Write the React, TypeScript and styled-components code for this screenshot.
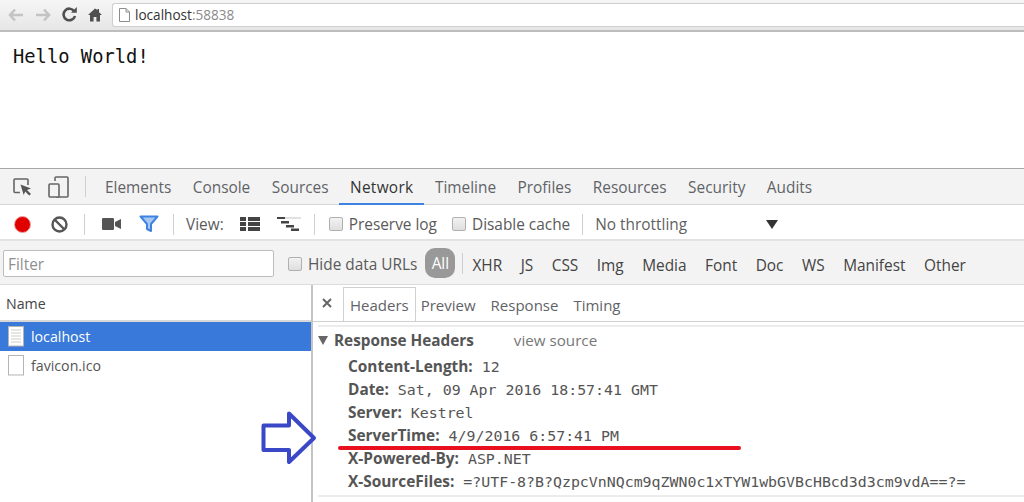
import styled, { createGlobalStyle } from "styled-components";

const GlobalStyle = createGlobalStyle`
  html, body {
    margin: 0;
    padding: 0;
    background: #fff;
    overflow: hidden;
  }
  * { box-sizing: border-box; }
`;

const Page = styled.div`
  position: relative;
  width: 1024px;
  height: 502px;
  overflow: hidden;
  font-family: "Open Sans", "Noto Sans", sans-serif;
  font-size: 15.4px;
  color: #5a5a5a;
  display: flex;
  flex-direction: column;
`;

const BrowserBar = styled.div`
  height: 32px;
  flex: none;
  display: flex;
  align-items: center;
  padding: 0 0 1px 8px;
  background: linear-gradient(#f6f6f6, #e6e6e6);
  border-bottom: 2px solid #bdbdbd;
`;

const NavIcon = styled.svg<{ $left?: number }>`
  flex: none;
  display: block;
  margin-left: ${(p) => p.$left ?? 0}px;
`;

const AddressBox = styled.div`
  flex: 1;
  height: 24px;
  margin-left: 10px;
  display: flex;
  align-items: center;
  gap: 5px;
  padding-left: 6px;
  background: #fff;
  border: 1px solid #cfcfcf;
  border-right: 0;
  border-radius: 3px 0 0 3px;
  font-size: 13.6px;
  color: #333;
`;

const Port = styled.span`
  color: #8a8a8a;
`;

const Content = styled.div`
  height: 136px;
  flex: none;
  padding: 12px 0 0 13px;
  font-family: "DejaVu Sans Mono", monospace;
  font-size: 18.8px;
  line-height: 26px;
  color: #111;
`;

const TabBar = styled.div`
  height: 37px;
  flex: none;
  display: flex;
  align-items: stretch;
  background: #f3f3f3;
  border-top: 1px solid #a8a8a8;
  border-bottom: 1px solid #d6d6d6;
  padding-left: 13px;
`;

const IconGroup = styled.div`
  display: flex;
  align-items: center;
  gap: 16px;
`;

const Separator = styled.div<{ $left: number; $right: number }>`
  flex: none;
  align-self: center;
  width: 1px;
  height: 21px;
  background: #cfcfcf;
  margin: 0 ${(p) => p.$right}px 0 ${(p) => p.$left}px;
`;

const MainTabs = styled.div`
  display: flex;
  gap: 21.5px;
`;

const MainTab = styled.div<{ $active?: boolean }>`
  position: relative;
  display: flex;
  align-items: center;
  padding-top: 2px;
  letter-spacing: ${(p) => (p.$active ? "0.3px" : "0")};
  color: ${(p) => (p.$active ? "#333" : "#5f6368")};
  &::after {
    content: "";
    display: ${(p) => (p.$active ? "block" : "none")};
    position: absolute;
    left: -11px;
    right: -11px;
    bottom: -1px;
    height: 2px;
    background: #3f83e0;
  }
`;

const NetToolbar = styled.div`
  height: 36px;
  flex: none;
  display: flex;
  align-items: center;
  padding: 4px 0 0 13px;
  background: #fff;
  border-bottom: 2px solid #e2e2e2;
`;

const ToolIcon = styled.svg<{ $gap?: number }>`
  flex: none;
  display: block;
  margin-right: ${(p) => p.$gap ?? 0}px;
`;

const Check = styled.span`
  flex: none;
  width: 14px;
  height: 14px;
  background: linear-gradient(#f2f2f2, #dedede);
  border: 1px solid #b0b0b0;
  border-radius: 2px;
`;

const CheckLabel = styled.label<{ $gap?: number }>`
  flex: none;
  display: flex;
  align-items: center;
  gap: 6px;
  margin-right: ${(p) => p.$gap ?? 0}px;
  white-space: nowrap;
`;

const Throttle = styled.div`
  flex: none;
  width: 183px;
  display: flex;
  align-items: center;
  justify-content: space-between;
  color: #5f5f5f;
`;

const Caret = styled.span`
  width: 0;
  height: 0;
  border-left: 6px solid transparent;
  border-right: 6px solid transparent;
  border-top: 9px solid #333;
`;

const FilterBar = styled.div`
  height: 44px;
  flex: none;
  display: flex;
  align-items: center;
  padding: 1px 0 0 3px;
  background: #f3f3f3;
  border-bottom: 1px solid #dcdcdc;
  ${CheckLabel} {
    margin-top: 2px;
  }
`;

const FilterInput = styled.div`
  flex: none;
  width: 271px;
  height: 27px;
  margin-right: 14px;
  padding: 2px 0 0 4px;
  display: flex;
  align-items: center;
  background: #fff;
  border: 1px solid #bdbdbd;
  border-radius: 2px;
  color: #8f8f8f;
`;

const AllPill = styled.div`
  flex: none;
  width: 30px;
  height: 30px;
  display: flex;
  align-items: center;
  justify-content: center;
  border-radius: 10px;
  background: #999;
  color: #fff;
`;

const FilterTypes = styled.div`
  display: flex;
  gap: 18.5px;
  margin-top: 4px;
  color: #444;
`;

const Panels = styled.div`
  flex: 1;
  min-height: 0;
  display: flex;
`;

const NamePanel = styled.div`
  flex: none;
  width: 313px;
  border-right: 2px solid #c4c4c4;
  font-size: 14.2px;
`;

const NameHeader = styled.div`
  height: 37px;
  padding: 2px 0 0 6px;
  display: flex;
  align-items: center;
  border-bottom: 2px solid #d8d8d8;
  color: #444;
`;

const FileRow = styled.div<{ $selected?: boolean }>`
  height: 29px;
  display: flex;
  align-items: center;
  gap: 6px;
  padding-left: 8px;
  background: ${(p) => (p.$selected ? "#3879d9" : "#fff")};
  color: ${(p) => (p.$selected ? "#fff" : "#555")};
`;

const Details = styled.div`
  flex: 1;
  min-width: 0;
`;

const DetailTabs = styled.div`
  height: 37px;
  display: flex;
  align-items: flex-end;
  padding-left: 9px;
  border-bottom: 1px solid #d0d0d0;
  font-size: 15px;
`;

const CloseMark = styled.svg`
  flex: none;
  align-self: center;
  display: block;
  margin-right: 11px;
`;

const DetailTab = styled.div<{ $active?: boolean }>`
  height: 34px;
  display: flex;
  align-items: center;
  padding: 1px 6px 0;
  margin-right: ${(p) => (p.$active ? -2 : 1)}px;
  color: #5f6368;
  background: ${(p) => (p.$active ? "#fff" : "transparent")};
  border: 1px solid ${(p) => (p.$active ? "#d0d0d0" : "transparent")};
  border-bottom: 0;
`;

const HeadersPane = styled.div`
  margin: 3px 0 0 5px;
  height: 172px;
  border-top: 2px solid #ececec;
  border-bottom: 2px solid #ececec;
`;

const SectionTitle = styled.div`
  height: 26px;
  display: flex;
  align-items: center;
  font-weight: 700;
  font-size: 15.3px;
  color: #555;
`;

const Triangle = styled.span`
  width: 0;
  height: 0;
  margin-right: 6px;
  border-left: 5px solid transparent;
  border-right: 5px solid transparent;
  border-top: 9px solid #666;
`;

const ViewSource = styled.span`
  margin-left: 40px;
  font-weight: 400;
  font-size: 15.2px;
  color: #777;
`;

const HeaderList = styled.div`
  padding: 2px 0 0 30px;
`;

const HeaderRow = styled.div`
  height: 23px;
  display: flex;
  align-items: center;
  gap: 9px;
  white-space: nowrap;
`;

const HeaderName = styled.span`
  font-weight: 700;
  font-size: 15.4px;
  color: #555;
`;

const HeaderValue = styled.span`
  font-family: "DejaVu Sans Mono", monospace;
  font-size: 14.9px;
  color: #555;
`;

const Annotation = styled.svg`
  position: absolute;
  left: 0;
  top: 0;
  pointer-events: none;
`;

const mainTabs = ["Elements", "Console", "Sources", "Network", "Timeline", "Profiles", "Resources", "Security", "Audits"];
const filterTypes = ["XHR", "JS", "CSS", "Img", "Media", "Font", "Doc", "WS", "Manifest", "Other"];
const responseHeaders = [
  ["Content-Length:", "12"],
  ["Date:", "Sat, 09 Apr 2016 18:57:41 GMT"],
  ["Server:", "Kestrel"],
  ["ServerTime:", "4/9/2016 6:57:41 PM"],
  ["X-Powered-By:", "ASP.NET"],
  ["X-SourceFiles:", "=?UTF-8?B?QzpcVnNQcm9qZWN0c1xTYW1wbGVBcHBcd3d3cm9vdA==?="],
];

function PageIcon({ lined }: { lined?: boolean }) {
  return (
    <ToolIcon width="17" height="21" viewBox="0 0 17 21">
      <rect x="0.5" y="0.5" width="15" height="19.5" fill="#fff" stroke="#b5b5b5" />
      {lined &&
        [4, 7, 10, 13, 16].map((y) => <path key={y} d={`M3 ${y}h10`} stroke="#dedede" strokeWidth="1.5" />)}
    </ToolIcon>
  );
}

export default function App() {
  return (
    <Page>
      <GlobalStyle />
      <BrowserBar>
        <NavIcon width="16" height="14" viewBox="0 0 16 14">
          <path d="M7 1.5 2 7l5 5.5M2.5 7H15" fill="none" stroke="#c4c4c4" strokeWidth="2.6" />
        </NavIcon>
        <NavIcon width="16" height="14" viewBox="0 0 16 14" $left={11}>
          <path d="M9 1.5 14 7l-5 5.5M13.5 7H1" fill="none" stroke="#c4c4c4" strokeWidth="2.6" />
        </NavIcon>
        <NavIcon width="15" height="15" viewBox="0 0 15 15" $left={11}>
          <path d="M12.2 4.2A5.8 5.8 0 1 0 13 9" fill="none" stroke="#505050" strokeWidth="2.6" />
          <path d="M9 5.8h5.8V0z" fill="#505050" />
        </NavIcon>
        <NavIcon width="14" height="14" viewBox="0 0 14 14" $left={11}>
          <path d="M7 .5 0 7h2v6.5h3.6V9h2.8v4.500H12V7h2l-3-2.8V1H9.500v1z" fill="#505050" />
        </NavIcon>
        <AddressBox>
          <NavIcon width="11" height="14" viewBox="0 0 11 14">
            <path d="M.5.5h6.500l3.500 3.500v9.500H.5zM7 .5V4h3.500" fill="#fff" stroke="#8c8c8c" />
          </NavIcon>
          <span>
            localhost<Port>:58838</Port>
          </span>
        </AddressBox>
      </BrowserBar>

      <Content>Hello World!</Content>

      <TabBar>
        <IconGroup>
          <NavIcon width="19" height="18" viewBox="0 0 19 18">
            <path d="M7 14.500H2a1 1 0 0 1-1-1V2a1 1 0 0 1 1-1h12a1 1 0 0 1 1 1v5" fill="none" stroke="#666" strokeWidth="1.600" />
            <path d="M7.500 6.500 18 10.500l-4 1.500 4 4-1.800 1.500-4-4-1.500 3.500z" fill="#555" />
          </NavIcon>
          <NavIcon width="21" height="22" viewBox="0 0 21 22">
            <path d="M7 5V2a1 1 0 0 1 1-1h11a1 1 0 0 1 1 1v18a1 1 0 0 1-1 1H8" fill="none" stroke="#666" strokeWidth="1.600" />
            <rect x="1" y="8" width="10" height="13" rx="1" fill="#f3f3f3" stroke="#666" strokeWidth="1.600" />
          </NavIcon>
        </IconGroup>
        <Separator $left={16} $right={19} />
        <MainTabs>
          {mainTabs.map((tab) => (
            <MainTab key={tab} $active={tab === "Network"}>
              {tab}
            </MainTab>
          ))}
        </MainTabs>
      </TabBar>

      <NetToolbar>
        <ToolIcon width="19" height="19" viewBox="0 0 19 19" $gap={19}>
          <circle cx="9.500" cy="9.500" r="8" fill="#e00000" stroke="#f2a0a0" />
        </ToolIcon>
        <ToolIcon width="17" height="17" viewBox="0 0 17 17">
          <circle cx="8.500" cy="8.500" r="7" fill="none" stroke="#555" strokeWidth="2.400" />
          <path d="m3.500 3.500 10 10" stroke="#555" strokeWidth="2.400" />
        </ToolIcon>
        <Separator $left={16} $right={17} />
        <ToolIcon width="19" height="12" viewBox="0 0 19 12" $gap={18}>
          <path d="M0 1a1 1 0 0 1 1-1h10a1 1 0 0 1 1 1v10a1 1 0 0 1-1 1H1a1 1 0 0 1-1-1zM13 4l6-3v10l-6-3z" fill="#555" />
        </ToolIcon>
        <ToolIcon width="20" height="18" viewBox="0 0 20 18">
          <path d="M1.500 1.500h17L12 9v7l-4-2V9z" fill="#a8c8f4" stroke="#3f83e0" strokeWidth="2" strokeLinejoin="round" />
        </ToolIcon>
        <Separator $left={14} $right={12} />
        <CheckLabel $gap={16}>View:</CheckLabel>
        <ToolIcon width="20" height="14" viewBox="0 0 20 14" $gap={17}>
          <path d="M0 0h6v4H0zM8 0h12v4H8zM0 5h6v4H0zM8 5h12v4H8zM0 10h6v4H0zM8 10h12v4H8z" fill="#444" />
        </ToolIcon>
        <ToolIcon width="24" height="14" viewBox="0 0 24 14">
          <path d="M0 0h8v2H0zM4 4h8v2.500H4zM9 8h8v2.500H9zM14 11.500h8V14h-8z" fill="#444" />
          <path d="M8 0h16v2H8z" fill="#e2e2e2" />
        </ToolIcon>
        <Separator $left={13} $right={14} />
        <CheckLabel $gap={15}>
          <Check />
          Preserve log
        </CheckLabel>
        <CheckLabel $gap={12}>
          <Check />
          Disable cache
        </CheckLabel>
        <Separator $left={0} $right={12} />
        <Throttle>
          No throttling
          <Caret />
        </Throttle>
      </NetToolbar>

      <FilterBar>
        <FilterInput>Filter</FilterInput>
        <CheckLabel $gap={8}>
          <Check />
          Hide data URLs
        </CheckLabel>
        <AllPill>All</AllPill>
        <Separator $left={7} $right={9} />
        <FilterTypes>
          {filterTypes.map((type) => (
            <span key={type}>{type}</span>
          ))}
        </FilterTypes>
      </FilterBar>

      <Panels>
        <NamePanel>
          <NameHeader>Name</NameHeader>
          <FileRow $selected>
            <PageIcon lined />
            localhost
          </FileRow>
          <FileRow>
            <PageIcon />
            favicon.ico
          </FileRow>
        </NamePanel>
        <Details>
          <DetailTabs>
            <CloseMark width="10" height="10" viewBox="0 0 10 10">
              <path d="m1 1 8 8M9 1 1 9" stroke="#666" strokeWidth="2" />
            </CloseMark>
            <DetailTab $active>Headers</DetailTab>
            <DetailTab>Preview</DetailTab>
            <DetailTab>Response</DetailTab>
            <DetailTab>Timing</DetailTab>
          </DetailTabs>
          <HeadersPane>
            <SectionTitle>
              <Triangle />
              Response Headers
              <ViewSource>view source</ViewSource>
            </SectionTitle>
            <HeaderList>
              {responseHeaders.map(([name, value]) => (
                <HeaderRow key={name}>
                  <HeaderName>{name}</HeaderName>
                  <HeaderValue>{value}</HeaderValue>
                </HeaderRow>
              ))}
            </HeaderList>
          </HeadersPane>
        </Details>
      </Panels>

      <Annotation width="1024" height="502" viewBox="0 0 1024 502">
        <path d="M263.500 425.500h25.500V413.500L314 438 289 462v-12h-25.500z" fill="none" stroke="#3a48c8" strokeWidth="4" strokeLinejoin="round" />
        <path d="M340 448h399" stroke="#e8101f" strokeWidth="4" strokeLinecap="round" />
      </Annotation>
    </Page>
  );
}
